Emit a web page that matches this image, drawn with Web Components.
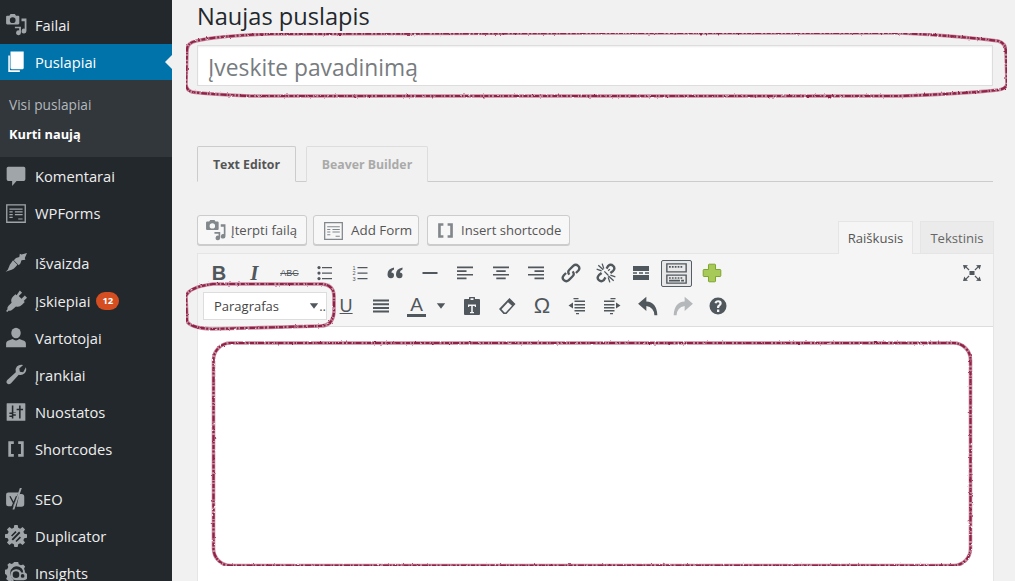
<!DOCTYPE html>
<html lang="lt">
<head>
<meta charset="utf-8">
<title>Naujas puslapis</title>
<style>
  html, body { margin: 0; height: 100%; overflow: hidden; background: #f1f1f1; }
  body { font-family: "Open Sans", "Liberation Sans", sans-serif; }
  wp-page { height: 581px; }
</style>
</head>
<body>
<wp-page>
  <wp-sidebar slot="side">
    <wp-menu-item icon="media">Failai</wp-menu-item>
    <wp-menu-item icon="pages" current>Puslapiai</wp-menu-item>
    <wp-submenu>
      <span>Visi puslapiai</span>
      <b>Kurti naują</b>
    </wp-submenu>
    <wp-menu-item icon="comment">Komentarai</wp-menu-item>
    <wp-menu-item icon="forms">WPForms</wp-menu-item>
    <wp-menu-item icon="brush" gap style="margin-top:13.500px">Išvaizda</wp-menu-item>
    <wp-menu-item icon="plugin" badge="12">Įskiepiai</wp-menu-item>
    <wp-menu-item icon="user">Vartotojai</wp-menu-item>
    <wp-menu-item icon="wrench">Įrankiai</wp-menu-item>
    <wp-menu-item icon="sliders">Nuostatos</wp-menu-item>
    <wp-menu-item icon="brackets">Shortcodes</wp-menu-item>
    <wp-menu-item icon="yoast" gap>SEO</wp-menu-item>
    <wp-menu-item icon="gear">Duplicator</wp-menu-item>
    <wp-menu-item icon="insights">Insights</wp-menu-item>
  </wp-sidebar>
  <wp-editor-screen></wp-editor-screen>
</wp-page>

<script>
(function () {
  "use strict";

  // visi ikonu keliai, 20x20
  const ICONS = {
    media: '<path fill-rule="evenodd" d="M2 1.500h2l1-1.500h4l1 1.500h2q1 0 1 1v6q0 1-1 1H2q-1 0-1-1v-6q0-1 1-1zM7 3a2.600 2.600 0 1 0 0 5.200A2.600 2.600 0 0 0 7 3z"/><path d="M15 4h4.500v11.500a2.200 2.200 0 1 1-1.600-2.100V6.500H15zM9 11.500h5.500V17a2.200 2.200 0 1 1-1.600-2.100V13H9z"/>',
    pages: '<path d="M6 .5h11v15q0 1-1 1H6q-1 0-1-1v-15z"/><path d="M3 4v15h10.500v-1.500H5q-.6 0-.6-.6V4z"/>',
    comment: '<path d="M3 1.500h14q1.500 0 1.500 1.500v10q0 1.500-1.500 1.500h-6.500l-4 4.500v-4.500H3q-1.500 0-1.500-1.500V3Q1.500 1.500 3 1.500z"/>',
    forms: '<path fill-rule="evenodd" d="M1 2h18v17H1zm1.200 1.200v14.600h15.600V3.200zM4 6h12v1H4zM4 8.500h3v1H4zm5 0h7v1H9zM4 11h3v1H4zm5 0h7v1H9zM4 13.500h3v1H4zm8 1.500h4v1h-4z"/>',
    brush: '<path d="M20 1l-2 4.500.5 1.500-3.500.5-1 3-1.500 1.500-4.500-4.500 2-2 3-1 .5-3 1.500.8z"/><path d="M7.300 7.500l4 4-1.800 2.200q-1.500 2-3.500 2.500L.5 18q2.500-1.500 3.200-4.500.4-2.200 2-3.800z"/>',
    plugin: '<path d="M13.500.5 15.500 2.500l-3 3 2.500 2.500 3-3 2 2-3 3 1 1-2.500 2.500q-2.500 2.500-5.500 1.500L6.500 18q-1.500 1.200-3 .6L2 20l-1-1 1.300-1.500q-.6-1.500.7-3l3-3Q4.800 8.500 7.300 6l2.200-2.200 1 1z"/>',
    user: '<ellipse cx="10" cy="5.500" rx="4.300" ry="4.800"/><path d="M1 18.500v-3q0-3 3-3.500 2-.5 3-1 1.500 1.300 3 1.300t3-1.300q1 .5 3 1 3 .5 3 3.500v3z"/>',
    wrench: '<path d="M19 3q1 3.200-1.200 5.500-2.200 2.100-5.300 1.200L5.500 17.500q-2 1.700-3.500.3t.3-3.500L9.800 7.500q-1-3 1-5.200Q13.300 0 16.500 1l-3.500 3 .5 3 3 .5z"/>',
    sliders: '<path fill-rule="evenodd" d="M2 2h16q.5 0 .5.500v15q0 .5-.5.500H2q-.5 0-.5-.500v-15Q1.500 2 2 2zm4.200 2v6.500H4v1.300h2.200v1.300H4v1.400h2.200V16h1.400v-2.500h2.200v-1.400H7.600v-1.300h2.200V10.500H7.600V4zm6.600 0v3h-2.200v1.300h2.200V16h1.400V8.300h2.200V7h-2.200V4z"/>',
    brackets: '<path d="M3 3h5v2.500H5.500v9H8V17H3zM17 3h-5v2.500h2.500v9H12V17h5z"/>',
    yoast: '<path d="M3 4h9.500L11 6.500l-3.500 10H3q-2 0-2-2V6q0-2 2-2zM13 5.500h2q2.500 0 2.500 2.500v6.500q0 2.500-2.500 2.500H10.500z"/><path fill="none" stroke="#23282d" stroke-width="1.200" d="M4.500 7.500l3.200 6M10.500 7.500l-4.500 10.500"/><path d="M13.500 0h1.800L8.500 19.500H6.800z"/>',
    gear: '<path fill-rule="evenodd" d="M8.500 0h3l.5 2.500 1.800.8 2.200-1.500 2.200 2.200-1.500 2.200.8 1.800 2.500.5v3l-2.500.5-.8 1.800 1.500 2.200-2.200 2.200-2.200-1.500-1.800.8-.5 2.500h-3L8 17.500l-1.800-.8L4 18.200 1.800 16l1.500-2.200-.8-1.800L0 11.500v-3L2.500 8l.8-1.800L1.800 4 4 1.800l2.200 1.500L8 2.500zM6 13l1.200 1.200 6.800-7L12.800 6zm-.5-3.500 1 1 4-4-1-1zm4 5 1 1 4-4-1-1z"/>',
    insights: '<path fill-rule="evenodd" d="M8 0h4l.5 2 2 1 2-.8 1.800 2-1 2q1.200 2 .7 4.800l-1.500-.5q.300-3-1.500-4.800-3.500-3-7.500-1-3.500 2.500-2.500 7 .5 3 3 4.500l-.5 1.300-1.500-.5-2 .8L1 15.500l1-2-.7-2L0 11V7l2-.5 1-2-.8-2L4 1l2 .8 1.800-.8z"/><path fill-rule="evenodd" d="M10 6.500a5 5 0 0 0 0 10h7a3.500 3.500 0 0 0 0-7h-2.200A5 5 0 0 0 10 6.500zm0 2a3 3 0 1 1 0 6 3 3 0 0 1 0-6zm6 2.500a1.700 1.700 0 1 1 0 3.400 1.700 1.700 0 0 1 0-3.400z"/>',

    ul: '<path d="M7 4h10v1.300H7zM7 9.500h10v1.300H7zM7 15h10v1.300H7z"/><circle cx="4" cy="4.600" r="1.600"/><circle cx="4" cy="10.100" r="1.600"/><circle cx="4" cy="15.600" r="1.600"/>',
    ol: '<path d="M7.500 4h10v1.300h-10zM7.500 9.500h10v1.300h-10zM7.500 15h10v1.300h-10z"/><text x="2.500" y="6.500" font-size="5.500" font-family="Liberation Sans,sans-serif">1</text><text x="2.500" y="12" font-size="5.500" font-family="Liberation Sans,sans-serif">2</text><text x="2.500" y="17.500" font-size="5.500" font-family="Liberation Sans,sans-serif">3</text>',
    quote: '<path d="M9 4.500v2Q6.500 7.500 6.300 9.500q2.700 0 2.700 2.800 0 3-3 3-3.500 0-3.500-4 0-5.500 6.500-6.800zM17.500 4.500v2q-2.500 1-2.700 3 2.700 0 2.700 2.800 0 3-3 3-3.500 0-3.500-4 0-5.500 6.500-6.800z"/>',
    hr: '<path d="M2.500 9h15v2h-15z"/>',
    left: '<path d="M2 3.500h16v1.700H2zM2 7.200h9.500v1.700H2zM2 10.900h16v1.700H2zM2 14.600h9.500v1.700H2z"/>',
    center: '<path d="M2 3.500h16v1.700H2zM5.300 7.200h9.400v1.700H5.300zM2 10.900h16v1.700H2zM5.300 14.600h9.400v1.700H5.300z"/>',
    right: '<path d="M2 3.500h16v1.700H2zM8.500 7.200H18v1.700H8.500zM2 10.900h16v1.700H2zM8.500 14.600H18v1.700H8.500z"/>',
    link: '<g fill="none" stroke="currentColor" stroke-width="2.100"><path d="M8.500 11.500q-2-2.500 0-4.500l3.500-3.500q2.300-2 4.500 0t0 4.500l-2 2"/><path d="M11.500 8.500q2 2.500 0 4.500L8 16.500q-2.300 2-4.500 0t0-4.500l2-2"/></g>',
    unlink: '<g fill="none" stroke="currentColor" stroke-width="2.100"><path d="M10.500 6l1.500-2.500q2.300-2 4.500 0t0 4.500l-2.500 2"/><path d="M9.500 14l-1.500 2.500q-2.300 2-4.500 0t0-4.500l2.500-2"/></g><path fill="none" stroke="currentColor" stroke-width="1.200" d="M3 3l4.500 4M6.500 1.500 8 6M1.500 6.500 6 8M17 17l-5-4.500M13.500 18.500 12 14M18.500 13.500 14 12M8.500 8.500l3.500 3.500M12 8l1.500-1.500"/>',
    more: '<path d="M2 3h16v5H2zM2 12h16v5H2zM2 9.300h4v1.400H2zM8 9.300h4v1.400H8zM14 9.300h4v1.400h-4z"/>',
    kitchen: '<path fill-rule="evenodd" d="M1 1h18v8.200H1zm1.200 1.200v5.800h15.600V2.200zM3.500 3.500h1.500V5H3.500zm2.500 0h1.500V5H6zm2.500 0H10V5H8.500zm2.500 0h1.500V5H11zm2.500 0H15V5h-1.500zM1 10.800h18V19H1zm1.200 1.200v5.800h15.600V12zM3.500 13.200H5v1.300H3.500zm2.500 0h1.500v1.300H6zm2.500 0H10v1.300H8.500zm2.500 0h1.500v1.300H11zm2.500 0H15v1.300h-1.500zM3.500 15.500h9.500V17H3.500zm10.500 0h2.500V17H14z"/>',
    plus: '<path fill="#a7c957" stroke="#7ea32d" stroke-width=".9" d="M7.500 2h5q.7 0 .7.700v4.100h4.100q.7 0 .7.700v5q0 .7-.7.700h-4.100v4.100q0 .7-.7.700h-5q-.7 0-.7-.700v-4.100H2.700q-.7 0-.7-.700v-5q0-.7.700-.700h4.100V2.700q0-.7.700-.7z"/>',
    fullscreen: '<path d="M7.500 8h5v4h-5zM1 2l5 .3-1.500 1.400L7.500 6.600 6.600 7.500 3.700 4.600 2.300 6.500zM19 2l-5 .3 1.500 1.400-3 2.900.9.900 2.900-2.900 1.400 1.900zM1 18l5-.3-1.500-1.400 3-2.900-.9-.9-2.900 2.900-1.400-1.900zM19 18l-5-.3 1.500-1.400-3-2.900.9-.9 2.900 2.900 1.400-1.900z"/>',
    justify: '<path d="M2 3.500h16v2H2zM2 7.200h16v2H2zM2 10.900h16v2H2zM2 14.600h16v2H2z"/>',
    caret: '<path d="M4 6h12l-6 8z"/>',
    paste: '<path fill-rule="evenodd" d="M3 3h4V1.500Q7 1 7.500 1h5q.5 0 .5.500V3h4q1 0 1 1v14q0 1-1 1H3q-1 0-1-1V4q0-1 1-1zm5.500-.7V4h3V2.300zM6 8.500V11h1.200V10h2v6H8v1.300h4V16h-1.200v-6h2v1H14V8.500z"/>',
    eraser: '<path fill-rule="evenodd" d="M12.500 2 18.500 8 9.500 18h-3L2 13zM11 6.200 4.500 13.200l3 3.200h1.200L15 9.700z"/>',
    outdent: '<path d="M6.500 2h5v1.300h-5zM7.500 4.500H18v1.500H7.500zM7.500 8h10.500v1.500H7.500zM7.500 11H18v1.500H7.500zM7.500 14H18v1.500H7.500zM9 17h3v1.300H9zM6 6.500v6L1.500 9.500z"/>',
    indent: '<path d="M8.500 2h5v1.300h-5zM2 4.500h10.500V6H2zM2 8h10.500v1.500H2zM2 11h10.500v1.500H2zM2 14h10.500v1.500H2zM8 17h3v1.300H8zM14 6.500v6l4.500-3z"/>',
    undo: '<path d="M8.500 1.500V6q9.500.5 10 12.500h-2.700Q15.500 11 8.500 10v4.500L1 8z"/>',
    redo: '<path d="M11.500 1.500V6q-9.500.5-10 12.500h2.700Q4.500 11 11.500 10v4.500L19 8z"/>',
    help: '<path fill-rule="evenodd" d="M10 1.500a8.500 8.500 0 1 1 0 17 8.500 8.500 0 0 1 0-17zM9 13.500V16h2.300v-2.500zM10.200 4.300q-3 0-3.700 2.700l2 .6q.4-1.300 1.500-1.300 1.400 0 1.400 1.100 0 .8-1 1.400-1.400.9-1.400 2.300v1h2.200v-.7q0-.8 1-1.400 1.500-1 1.500-2.700 0-3-3.500-3z"/>'
  };

  function icon(name, size) {
    return `<svg width="${size}" height="${size}" viewBox="0 0 20 20" fill="currentColor" aria-hidden="true">${ICONS[name]}</svg>`;
  }

  class WpPage extends HTMLElement {
    constructor() {
      super();
      this.attachShadow({ mode: "open" });
      this.shadowRoot.innerHTML = `
        <style>
          :host { display: flex; overflow: hidden; }
          ::slotted(wp-sidebar) { flex: 0 0 172px; }
          ::slotted(wp-editor-screen) { flex: 1; min-width: 0; }
        </style>
        <slot name="side"></slot>
        <slot></slot>
      `;
    }
  }

  class WpSidebar extends HTMLElement {
    constructor() {
      super();
      this.attachShadow({ mode: "open" });
      this.shadowRoot.innerHTML = `
        <style>
          :host { display: block; background: #23282d; padding-top: 6.800px; color: #eee; font-size: 14.700px; }
        </style>
        <slot></slot>
      `;
    }
  }

  class WpMenuItem extends HTMLElement {
    constructor() {
      super();
      this.attachShadow({ mode: "open" });
      const badge = this.getAttribute("badge");
      this.shadowRoot.innerHTML = `
        <style>
          :host { display: flex; align-items: center; height: 37.200px; color: #eee; }
          :host([gap]) { margin-top: 12.500px; }
          :host([current]) { background: #0073aa; color: #fff; height: 36px; position: relative; margin-top: 0; }
          :host([current])::after {
            content: ""; position: absolute; right: 0; top: 11px;
            border: 7.500px solid transparent; border-right-color: #f1f1f1; border-left-width: 0;
          }
          .ico { flex: 0 0 35px; box-sizing: border-box; padding-right: 4px; display: flex; justify-content: center; color: #a0a5aa; }
          :host([current]) .ico { color: #fff; }
          .badge {
            margin-left: 6px; width: 23px; height: 18px; border-radius: 9px; background: #d54e21;
            color: #fff; font-size: 9.500px; font-weight: 700; display: flex; align-items: center; justify-content: center;
          }
        </style>
        <span class="ico">${icon(this.getAttribute("icon"), 22)}</span>
        <slot></slot>
        ${badge ? `<span class="badge">${badge}</span>` : ""}
      `;
    }
  }

  class WpSubmenu extends HTMLElement {
    constructor() {
      super();
      this.attachShadow({ mode: "open" });
      this.shadowRoot.innerHTML = `
        <style>
          :host {
            display: flex; flex-direction: column; gap: 11px; background: #32373c; height: 77px;
            box-sizing: border-box; padding: 14.700px 0 0 9px; font-size: 13.700px; line-height: 19px; color: #b4b9be;
          }
          ::slotted(b) { color: #fff; font-weight: 700; font-size: 12.800px; }
        </style>
        <slot></slot>
      `;
    }
  }

  class WpTool extends HTMLElement {
    constructor() {
      super();
      this.attachShadow({ mode: "open" });
      const name = this.getAttribute("icon");
      this.shadowRoot.innerHTML = `
        <style>
          :host { flex: 0 0 35.200px; height: 28px; display: flex; align-items: center; justify-content: center; color: #50575d; }
          :host([off]) { color: #b4b8bb; }
          :host([narrow]) { flex-basis: 16px; margin: 0 5px 0 -1px; }
          :host([pressed]) .box {
            width: 31px; height: 27px; box-sizing: border-box; border: 1px solid #555d66; border-radius: 2px;
            background: #e8e8e8; display: flex; align-items: center; justify-content: center;
          }
          .box { display: flex; }
        </style>
        <span class="box">${name ? icon(name, +this.getAttribute("size") || 20) : "<slot></slot>"}</span>
      `;
    }
  }

  class WpButton extends HTMLElement {
    constructor() {
      super();
      this.attachShadow({ mode: "open" });
      const name = this.getAttribute("icon");
      this.shadowRoot.innerHTML = `
        <style>
          :host {
            display: inline-flex; align-items: center; gap: 5px; height: 30px; box-sizing: border-box;
            padding: 0 0 0 7px; background: #f7f7f7; border: 1px solid #ccc; border-radius: 3px;
            box-shadow: 0 1px 0 #ccc; color: #555; font-size: 13.100px; white-space: nowrap;
          }
          svg { color: #82878c; }
        </style>
        ${icon(name, 21)}
        <slot></slot>
      `;
    }
  }

  class WpEditorScreen extends HTMLElement {
    constructor() {
      super();
      this.attachShadow({ mode: "open" });
      const outline = `
        <path d="M187 50Q187 43 196 41Q215 36 270 34L590 33L900 33Q960 36 998 41Q1006 43 1006 52L1007 84Q1006 89 998 90Q960 94 900 96L590 96L250 96Q205 94 192 92Q186 90 186 84Z"/>
        <path d="M186 296Q189 287 213 284L322 284Q334 285 334 296L334 312Q333 326 320 326L212 329Q190 328 187 321Z"/>
        <rect x="213.500" y="343" width="757" height="222.500" rx="17"/>`;
      this.shadowRoot.innerHTML = `
        <style>
          :host { display: block; position: relative; height: 581px; padding: 0 22px 0 25px; box-sizing: border-box; background: #f1f1f1; overflow: hidden; }
          h1 { margin: 0; height: 45px; box-sizing: border-box; padding-top: 1px; font-size: 23.600px; line-height: 30px; font-weight: 400; color: #23282d; }
          .title {
            height: 41px; box-sizing: border-box; border: 1px solid #ddd; background: #fff; padding-left: 10px;
            font-size: 22.800px; line-height: 43px; color: #777c80; box-shadow: inset 0 1px 2px rgba(0,0,0,.07);
          }
          .builder { display: flex; gap: 10px; margin-top: 60px; height: 35px; border-bottom: 1px solid #ccc; font-size: 12.300px; font-weight: 700; }
          .builder span {
            height: 36px; box-sizing: border-box; border: 1px solid #ddd; border-bottom: 0; display: flex;
            align-items: center; justify-content: center; border-radius: 2px 2px 0 0;
          }
          .builder .on { width: 99px; color: #555; border-color: #ccc; background: #f1f1f1; border-bottom: 1px solid #f1f1f1; }
          .builder .off { width: 122px; color: #aaa; background: #f1f1f1; }
          .media { display: flex; align-items: flex-start; justify-content: space-between; margin-top: 33px; height: 38px; }
          .btns { display: flex; }
          .btns wp-button:nth-child(1) { width: 110px; margin-right: 6px; }
          .btns wp-button:nth-child(2) { width: 106px; margin-right: 8px; gap: 7px; padding-left: 9px; font-size: 13.400px; }
          .btns wp-button:nth-child(3) { width: 143px; padding-left: 7px; }
          .switch { display: flex; gap: 7px; margin: 6px -1px 0 0; font-size: 13.100px; }
          .switch span {
            height: 32px; box-sizing: border-box; display: flex; align-items: center; justify-content: center;
            border: 1px solid #e5e5e5; border-bottom: 0;
          }
          .switch .vis { width: 75px; background: #f5f5f5; color: #555; height: 33px; }
          .switch .txt { width: 74px; background: #ebebeb; color: #666; }
          .box { margin-right: -1px; border: 1px solid #e5e5e5; background: #fff; }
          .bar { height: 73px; box-sizing: border-box; background: #f5f5f5; border-bottom: 1px solid #ddd; padding: 5px 0 0 3.500px; }
          .row { display: flex; align-items: center; height: 28px; }
          .row + .row { margin-top: 5px; }
          .spacer { flex: 1; }
          .row > wp-tool:last-child.fs { margin-right: 3px; }
          .fmt {
            width: 124px; height: 28px; box-sizing: border-box; margin: 0 1.500px 0 1.500px; border: 1px solid #ddd; background: #fff;
            display: flex; align-items: center; justify-content: space-between; padding: 0 0 0 10px; font-size: 13px; color: #444;
          }
          .fmt i { font-style: normal; display: flex; align-items: center; color: #50575d; }
          .fmt i svg { margin-right: -2px; }
          .content { height: 300px; background: #fff; }
          b.bold { font: 700 20px "Liberation Sans", sans-serif; }
          i.it { font: italic 700 21px "Liberation Serif", serif; }
          s.abc { font: 9px "Liberation Sans", sans-serif; }
          u.und { font: 18px "Liberation Sans", sans-serif; }
          span.a { font: 19px/19px "Liberation Sans", sans-serif; border-bottom: 3px solid #50575d; padding: 0 3px; }
          span.om { font: 22px "Liberation Sans", sans-serif; }
          svg.marks { position: absolute; left: -172px; top: 0; pointer-events: none; }
        </style>
        <h1>Naujas puslapis</h1>
        <div class="title">Įveskite pavadinimą</div>
        <div class="builder"><span class="on">Text Editor</span><span class="off">Beaver Builder</span></div>
        <div class="media">
          <div class="btns">
            <wp-button icon="media">Įterpti failą</wp-button>
            <wp-button icon="forms">Add Form</wp-button>
            <wp-button icon="brackets">Insert shortcode</wp-button>
          </div>
          <div class="switch"><span class="vis">Raiškusis</span><span class="txt">Tekstinis</span></div>
        </div>
        <div class="box">
          <div class="bar">
            <div class="row">
              <wp-tool><b class="bold">B</b></wp-tool>
              <wp-tool><i class="it">I</i></wp-tool>
              <wp-tool><s class="abc">ABC</s></wp-tool>
              <wp-tool icon="ul"></wp-tool>
              <wp-tool icon="ol"></wp-tool>
              <wp-tool icon="quote"></wp-tool>
              <wp-tool icon="hr"></wp-tool>
              <wp-tool icon="left"></wp-tool>
              <wp-tool icon="center"></wp-tool>
              <wp-tool icon="right"></wp-tool>
              <wp-tool icon="link" size="22"></wp-tool>
              <wp-tool icon="unlink" size="22"></wp-tool>
              <wp-tool icon="more"></wp-tool>
              <wp-tool icon="kitchen" pressed size="23"></wp-tool>
              <wp-tool icon="plus" size="22"></wp-tool>
              <span class="spacer"></span>
              <wp-tool class="fs" icon="fullscreen"></wp-tool>
            </div>
            <div class="row">
              <div class="fmt">Paragrafas<i>${icon("caret", 14)}..</i></div>
              <wp-tool><u class="und">U</u></wp-tool>
              <wp-tool icon="justify"></wp-tool>
              <wp-tool><span class="a">A</span></wp-tool>
              <wp-tool icon="caret" narrow size="14"></wp-tool>
              <wp-tool icon="paste"></wp-tool>
              <wp-tool icon="eraser"></wp-tool>
              <wp-tool><span class="om">Ω</span></wp-tool>
              <wp-tool icon="outdent"></wp-tool>
              <wp-tool icon="indent"></wp-tool>
              <wp-tool icon="undo" size="22"></wp-tool>
              <wp-tool icon="redo" off size="22"></wp-tool>
              <wp-tool icon="help"></wp-tool>
            </div>
          </div>
          <div class="content"></div>
        </div>
        <!-- raudoni ranka piesti apvadai virs turinio -->
        <svg class="marks" width="1015" height="581" fill="none" stroke-linecap="butt">
          <defs>
            <filter id="rough" x="0" y="0" width="100%" height="100%">
              <feTurbulence type="fractalNoise" baseFrequency=".35" numOctaves="2" seed="4"/>
              <feDisplacementMap in="SourceGraphic" scale="2.200"/>
            </filter>
          </defs>
          <g filter="url(#rough)">
            <g stroke="#c68aa0" stroke-width="3.600">${outline}</g>
            <g stroke="#8f2045" stroke-width="2.200" stroke-dasharray="4 1.500 1.500 1 6 2 2 1.500">${outline}</g>
          </g>
        </svg>
      `;
    }
  }

  // viska registruojam is karto
  customElements.define("wp-tool", WpTool);
  customElements.define("wp-button", WpButton);
  customElements.define("wp-menu-item", WpMenuItem);
  customElements.define("wp-submenu", WpSubmenu);
  customElements.define("wp-sidebar", WpSidebar);
  customElements.define("wp-editor-screen", WpEditorScreen);
  customElements.define("wp-page", WpPage);
})();
</script>
</body>
</html>
